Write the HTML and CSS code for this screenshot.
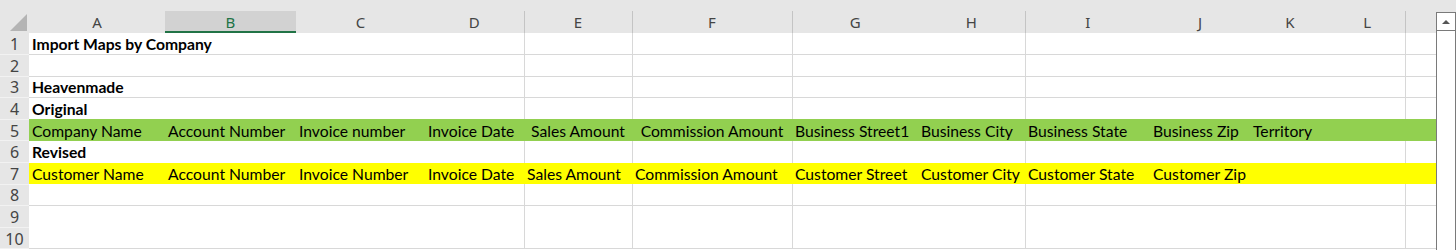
FILE: index.html
```
<!DOCTYPE html>
<html lang="en">
<head>
    <meta charset="UTF-8">
    <meta name="viewport" content="width=device-width, initial-scale=1.0">
    <title>Import Maps by Company</title>
    <link rel="stylesheet" href="styles.css">
</head>
<body>
<div class="window">
    <div class="sheet">
        <div class="strip"></div>
        <table class="grid">
            <colgroup>
                <col class="w-rh"><col class="w-a"><col class="w-b"><col class="w-c"><col class="w-d">
                <col class="w-e"><col class="w-f"><col class="w-g"><col class="w-h"><col class="w-i">
                <col class="w-j"><col class="w-k"><col class="w-l"><col class="w-m">
            </colgroup>
            <thead>
                <tr>
                    <th class="corner"><span class="tri"></span></th>
                    <th>A</th><th class="sel">B</th><th>C</th><th>D</th><th>E</th><th>F</th>
                    <th>G</th><th>H</th><th>I</th><th>J</th><th>K</th><th>L</th><th></th>
                </tr>
            </thead>
            <tbody>
                <tr class="ln">
                    <th>1</th><td class="b">Import Maps by Company</td>
                    <td></td><td></td><td></td><td></td><td></td><td></td><td></td><td></td><td></td><td></td><td></td><td></td>
                </tr>
                <tr class="ln">
                    <th>2</th>
                    <td></td><td></td><td></td><td></td><td></td><td></td><td></td><td></td><td></td><td></td><td></td><td></td><td></td>
                </tr>
                <tr class="ln">
                    <th>3</th><td class="b">Heavenmade</td>
                    <td></td><td></td><td></td><td></td><td></td><td></td><td></td><td></td><td></td><td></td><td></td><td></td>
                </tr>
                <tr>
                    <th>4</th><td class="b">Original</td>
                    <td></td><td></td><td></td><td></td><td></td><td></td><td></td><td></td><td></td><td></td><td></td><td></td>
                </tr>
                <tr class="band green">
                    <th>5</th>
                    <td>Company Name</td>
                    <td>Account Number</td>
                    <td>Invoice number</td>
                    <td>Invoice Date</td>
                    <td class="ctr">Sales Amount</td>
                    <td class="ctr">Commission Amount</td>
                    <td>Business Street1</td>
                    <td>Business City</td>
                    <td>Business State</td>
                    <td>Business Zip</td>
                    <td>Territory</td>
                    <td></td><td></td>
                </tr>
                <tr>
                    <th>6</th><td class="b">Revised</td>
                    <td></td><td></td><td></td><td></td><td></td><td></td><td></td><td></td><td></td><td></td><td></td><td></td>
                </tr>
                <tr class="band yellow">
                    <th>7</th>
                    <td>Customer Name</td>
                    <td>Account Number</td>
                    <td>Invoice Number</td>
                    <td>Invoice Date</td>
                    <td>Sales Amount</td>
                    <td>Commission Amount</td>
                    <td>Customer Street</td>
                    <td>Customer City</td>
                    <td>Customer State</td>
                    <td>Customer Zip</td>
                    <td></td><td></td><td></td>
                </tr>
                <tr class="ln">
                    <th>8</th>
                    <td></td><td></td><td></td><td></td><td></td><td></td><td></td><td></td><td></td><td></td><td></td><td></td><td></td>
                </tr>
                <tr>
                    <th>9</th>
                    <td></td><td></td><td></td><td></td><td></td><td></td><td></td><td></td><td></td><td></td><td></td><td></td><td></td>
                </tr>
                <tr class="ln">
                    <th>10</th>
                    <td></td><td></td><td></td><td></td><td></td><td></td><td></td><td></td><td></td><td></td><td></td><td></td><td></td>
                </tr>
            </tbody>
        </table>
    </div>
    <div class="vscroll">
        <div class="track">
            <div class="up"></div>
        </div>
    </div>
</div>
</body>
</html>
```
FILE: styles.css
```
body {
    margin: 0;
    background: #fff;
}
.window {
    display: flex;
    width: 1456px;
    height: 250px;
    overflow: hidden;
}
.sheet {
    width: 1436px;
    flex: none;
}
.strip {
    height: 11px;
    background: #e6e6e6;
}
.grid {
    width: 1436px;
    border-collapse: collapse;
    table-layout: fixed;
    font-family: Lato, "Liberation Sans", sans-serif;
    font-size: 15.7px;
    color: #000;
}
.w-rh { width: 29px; }
.w-a { width: 136px; }
.w-b { width: 131px; }
.w-c { width: 129px; }
.w-d { width: 99px; }
.w-e { width: 108px; }
.w-f { width: 160px; }
.w-g { width: 126px; }
.w-h { width: 107px; }
.w-i { width: 125px; }
.w-j { width: 100px; }
.w-k { width: 80px; }
.w-l { width: 75px; }
.w-m { width: 31px; }

.grid thead th {
    height: 22px;
    padding: 0;
    background: #e6e6e6;
    font-family: "Noto Sans", sans-serif;
    font-size: 15px;
    line-height: 20px;
    font-weight: normal;
    color: #444;
    text-align: center;
}
.grid thead th.sel {
    background: #d2d2d2;
    color: #217346;
    box-shadow: inset 0 -2px 0 #217346;
}
.corner {
    position: relative;
}
.tri {
    position: absolute;
    right: 2px;
    bottom: 2px;
    width: 0;
    height: 0;
    border-left: 17px solid transparent;
    border-bottom: 17px solid #b4b4b4;
}

/* gridlines that show in the capture */
.grid tr > :nth-child(5),
.grid tr > :nth-child(6),
.grid tr > :nth-child(7),
.grid tr > :nth-child(9),
.grid tr > :nth-child(13) {
    border-right: 1px solid #d8d8d8;
}
.grid thead tr > :nth-child(n) {
    border-right-color: #c4c4c4;
}
.grid thead tr > :nth-child(1),
.grid thead tr > :nth-child(2),
.grid thead tr > :nth-child(3) {
    border-right: none;
}

.grid tbody tr {
    height: 21.6px;
}
.grid tbody th {
    padding: 1px 0 0;
    background: #e6e6e6;
    font-family: "Noto Sans", sans-serif;
    font-size: 16px;
    line-height: 18px;
    font-weight: normal;
    color: #444;
    text-align: center;
    border-bottom: 1px solid #f2f2f2;
}
.grid td {
    padding: 1px 3px 0;
    line-height: 18px;
    white-space: nowrap;
    overflow: visible;
}
.grid .ln td {
    border-bottom: 1px solid #d8d8d8;
}
.b {
    font-weight: bold;
}
.ctr {
    text-align: center;
}
.band td {
    border-right: none !important;
}
.green td {
    background: #92d050;
}
.yellow td {
    background: #ffff00;
}

.vscroll {
    width: 20px;
    flex: none;
    padding-top: 12px;
    box-sizing: border-box;
    background: #e6e6e6;
}
.track {
    height: 100%;
    box-sizing: border-box;
    background: #fff;
    border: 1px solid #7a7a7a;
    border-bottom: none;
}
.up {
    height: 17px;
    border-bottom: 1px solid #7a7a7a;
    display: flex;
    align-items: center;
    justify-content: center;
}
.up::before {
    content: "";
    border-left: 4px solid transparent;
    border-right: 4px solid transparent;
    border-bottom: 4px solid #555;
}
```
